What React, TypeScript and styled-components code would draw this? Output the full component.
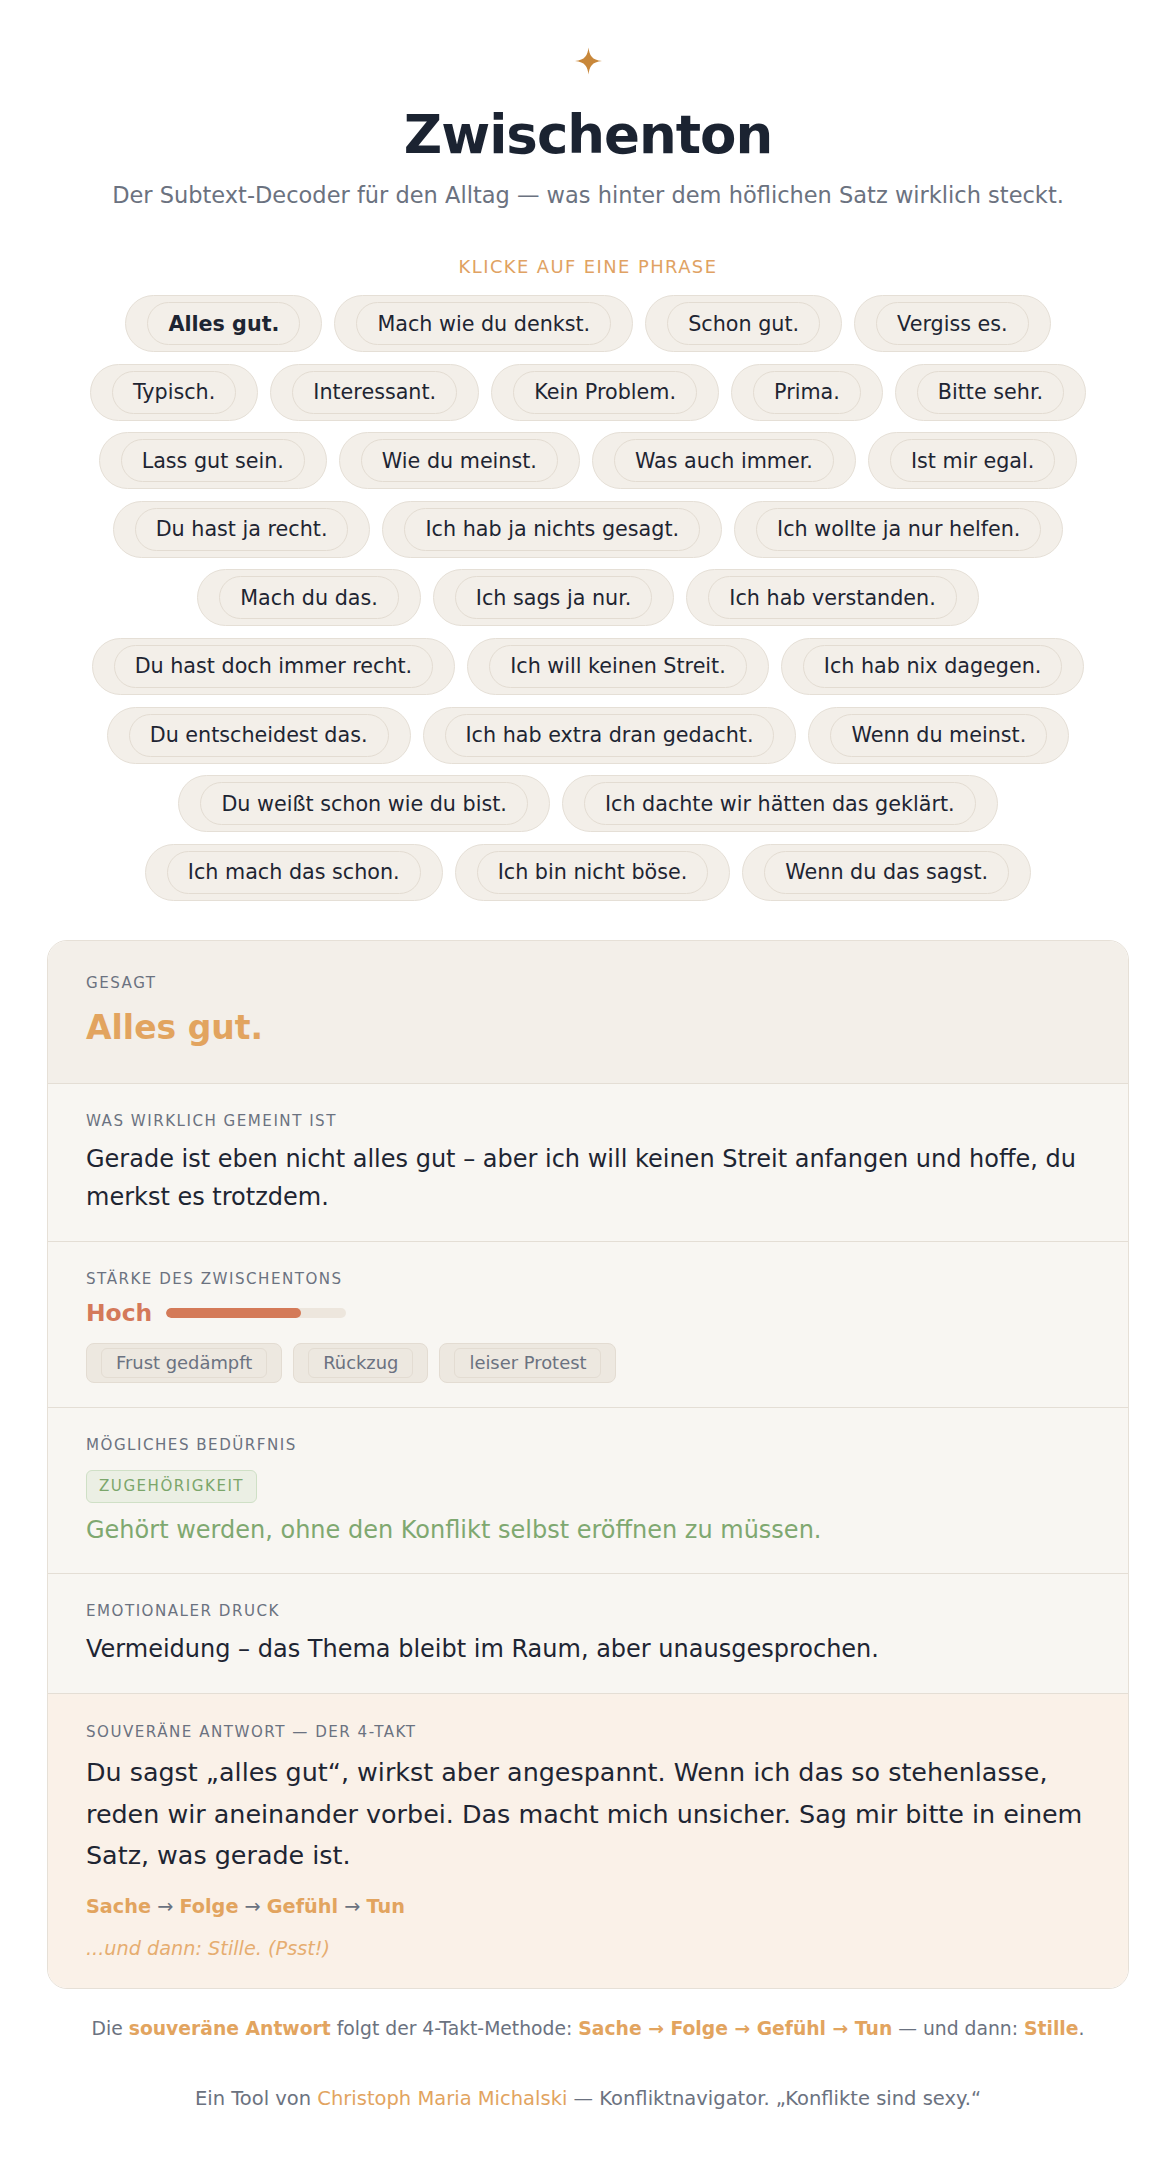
import React, { useState } from 'react';
import styled, { createGlobalStyle } from 'styled-components';

const GlobalStyle = createGlobalStyle`
  html, body { margin: 0; padding: 0; background: #ffffff; }
  body {
    font-family: "DejaVu Sans", "Noto Sans", sans-serif;
    color: #1f2633;
  }
  * { box-sizing: border-box; }
`;

const Page = styled.main`
  width: 1082px;
  margin: 0 auto;
  padding: 47px 0 40px;
`;

const Header = styled.header`
  display: flex;
  flex-direction: column;
  align-items: center;
  text-align: center;
`;

const Star = styled.svg`
  display: block;
  width: 27px;
  height: 28px;
`;

const Title = styled.h1`
  margin: 29px 0 0;
  font-size: 53px;
  line-height: 61px;
  font-weight: 700;
  letter-spacing: -1px;
  color: #1b2331;
`;

const Subtitle = styled.p`
  margin: 15px 0 0;
  font-size: 22.5px;
  line-height: 30px;
  color: #6b7280;
`;

const PickLabel = styled.div`
  margin-top: 45px;
  font-size: 17.9px;
  line-height: 23px;
  letter-spacing: 1.43px;
  color: #e0a263;
  text-transform: uppercase;
`;

const PillList = styled.div`
  margin-top: 17px;
  display: flex;
  flex-wrap: wrap;
  justify-content: center;
  column-gap: 12px;
  row-gap: 11.6px;
`;

const Pill = styled.button`
  font-family: inherit;
  border: 1px solid #e5dfd6;
  background: #f3efe9;
  border-radius: 999px;
  padding: 6px 21px;
  margin: 0;
  cursor: pointer;
`;

const PillInner = styled.span<{ $active: boolean }>`
  display: block;
  border: 1px solid #e3dcd2;
  border-radius: 999px;
  padding: 8.5px 20px;
  font-size: 20.7px;
  line-height: 24px;
  white-space: nowrap;
  color: #1e2532;
  font-weight: ${(p) => (p.$active ? 700 : 400)};
`;

const Card = styled.section`
  margin-top: 39px;
  border: 1px solid #e6e0d7;
  border-radius: 20px;
  overflow: hidden;
`;

type Tone = 'top' | 'mid' | 'warm';

const toneBg: Record<Tone, string> = {
  top: '#f3efe9',
  mid: '#f8f6f2',
  warm: '#faf1e8',
};

const Block = styled.div<{ $tone: Tone }>`
  background: ${(p) => toneBg[p.$tone]};
  padding: 28px 38px 24px;
  & + & {
    border-top: 1px solid #e4ded5;
  }
`;

const TopBlock = styled(Block)`
  padding: 33px 38px 36px;
`;

const WarmBlock = styled(Block)`
  padding-top: 29px;
  padding-bottom: 26px;
`;

const Label = styled.div<{ $gap?: number }>`
  font-size: 15.1px;
  line-height: 18px;
  letter-spacing: 1.5px;
  text-transform: uppercase;
  color: #6b7280;
  margin-bottom: ${(p) => p.$gap ?? 11}px;
`;

const Said = styled.div`
  font-size: 33px;
  line-height: 39.6px;
  font-weight: 700;
  color: #e2a45f;
`;

const BodyText = styled.p`
  margin: 0;
  font-size: 24px;
  line-height: 37.7px;
  color: #1e2532;
`;

const StrengthRow = styled.div`
  margin-top: 8px;
  display: flex;
  align-items: center;
  gap: 14px;
`;

const StrengthValue = styled.span`
  font-size: 23.4px;
  line-height: 29px;
  font-weight: 700;
  color: #d4795a;
`;

const Track = styled.div`
  width: 180px;
  height: 10px;
  border-radius: 5px;
  background: #ede6dd;
  overflow: hidden;
`;

const Fill = styled.div`
  height: 100%;
  border-radius: 5px;
  background: #d47a58;
`;

const TagRow = styled.div`
  margin-top: 15px;
  display: flex;
  flex-wrap: wrap;
  gap: 11px;
`;

const Tag = styled.span`
  display: inline-block;
  border: 1px solid #e3dcd2;
  background: #ede8e0;
  border-radius: 8px;
  padding: 4px 14px;
`;

const TagInner = styled.span`
  display: block;
  border: 1px solid #e3dcd2;
  border-radius: 6px;
  padding: 3px 14px;
  font-size: 17.9px;
  line-height: 22px;
  color: #6b7280;
`;

const NeedBadge = styled.span`
  display: inline-block;
  margin-top: 5px;
  border: 1px solid #cfe0c6;
  background: #ebefe4;
  border-radius: 6px;
  padding: 6.5px 12px;
  font-size: 15.1px;
  line-height: 18px;
  letter-spacing: 1.5px;
  text-transform: uppercase;
  color: #7ba66b;
`;

const NeedText = styled.p`
  margin: 9px 0 0;
  font-size: 24px;
  line-height: 37.7px;
  color: #7fa870;
`;

const Response = styled.p`
  margin: 0;
  font-size: 25.4px;
  line-height: 41.5px;
  color: #1e2532;
`;

const Steps = styled.div`
  margin-top: 16px;
  font-size: 19.25px;
  line-height: 27px;
  color: #6b7280;
`;

const Step = styled.b`
  font-weight: 700;
  color: #e2a45f;
`;

const Whisper = styled.div`
  margin-top: 15px;
  font-size: 19.25px;
  line-height: 27px;
  font-style: italic;
  color: #e6ad70;
`;

const Note = styled.p`
  margin: 26px 0 0;
  text-align: center;
  font-size: 18.75px;
  line-height: 27px;
  color: #6b7280;
`;

const Accent = styled.b`
  font-weight: 700;
  color: #e2a45f;
`;

const Credit = styled.p`
  margin: 42px 0 0;
  text-align: center;
  font-size: 19.5px;
  line-height: 29px;
  color: #6b7280;
`;

const CreditLink = styled.a`
  color: #e2a45f;
  text-decoration: none;
`;

const phrases = [
  'Alles gut.',
  'Mach wie du denkst.',
  'Schon gut.',
  'Vergiss es.',
  'Typisch.',
  'Interessant.',
  'Kein Problem.',
  'Prima.',
  'Bitte sehr.',
  'Lass gut sein.',
  'Wie du meinst.',
  'Was auch immer.',
  'Ist mir egal.',
  'Du hast ja recht.',
  'Ich hab ja nichts gesagt.',
  'Ich wollte ja nur helfen.',
  'Mach du das.',
  'Ich sags ja nur.',
  'Ich hab verstanden.',
  'Du hast doch immer recht.',
  'Ich will keinen Streit.',
  'Ich hab nix dagegen.',
  'Du entscheidest das.',
  'Ich hab extra dran gedacht.',
  'Wenn du meinst.',
  'Du weißt schon wie du bist.',
  'Ich dachte wir hätten das geklärt.',
  'Ich mach das schon.',
  'Ich bin nicht böse.',
  'Wenn du das sagst.',
];

const decoded = {
  meaning:
    'Gerade ist eben nicht alles gut – aber ich will keinen Streit anfangen und hoffe, du merkst es trotzdem.',
  strength: 'Hoch',
  level: 75,
  tags: ['Frust gedämpft', 'Rückzug', 'leiser Protest'],
  need: 'Zugehörigkeit',
  needText: 'Gehört werden, ohne den Konflikt selbst eröffnen zu müssen.',
  pressure: 'Vermeidung – das Thema bleibt im Raum, aber unausgesprochen.',
  answer:
    'Du sagst „alles gut“, wirkst aber angespannt. Wenn ich das so stehenlasse, reden wir aneinander vorbei. Das macht mich unsicher. Sag mir bitte in einem Satz, was gerade ist.',
};

export default function App() {
  const [selected, setSelected] = useState('Alles gut.');

  return (
    <>
      <GlobalStyle />
      <Page>
        <Header>
          <Star viewBox="0 0 24 24" aria-hidden="true">
            <path
              d="M12 0 C12.8 7 15 11.2 24 12 C15 12.8 12.8 17 12 24 C11.2 17 9 12.8 0 12 C9 11.2 11.2 7 12 0 Z"
              fill="#c8873a"
            />
          </Star>
          <Title>Zwischenton</Title>
          <Subtitle>
            Der Subtext-Decoder für den Alltag — was hinter dem höflichen Satz wirklich steckt.
          </Subtitle>
          <PickLabel>Klicke auf eine Phrase</PickLabel>
        </Header>

        <PillList>
          {phrases.map((p) => (
            <Pill key={p} type="button" onClick={() => setSelected(p)}>
              <PillInner $active={p === selected}>{p}</PillInner>
            </Pill>
          ))}
        </PillList>

        <Card>
          <TopBlock $tone="top">
            <Label $gap={16}>Gesagt</Label>
            <Said>{selected}</Said>
          </TopBlock>

          <Block $tone="mid">
            <Label>Was wirklich gemeint ist</Label>
            <BodyText>{decoded.meaning}</BodyText>
          </Block>

          <Block $tone="mid">
            <Label>Stärke des Zwischentons</Label>
            <StrengthRow>
              <StrengthValue>{decoded.strength}</StrengthValue>
              <Track>
                <Fill style={{ width: `${decoded.level}%` }} />
              </Track>
            </StrengthRow>
            <TagRow>
              {decoded.tags.map((t) => (
                <Tag key={t}>
                  <TagInner>{t}</TagInner>
                </Tag>
              ))}
            </TagRow>
          </Block>

          <Block $tone="mid">
            <Label>Mögliches Bedürfnis</Label>
            <NeedBadge>{decoded.need}</NeedBadge>
            <NeedText>{decoded.needText}</NeedText>
          </Block>

          <Block $tone="mid">
            <Label>Emotionaler Druck</Label>
            <BodyText>{decoded.pressure}</BodyText>
          </Block>

          <WarmBlock $tone="warm">
            <Label>Souveräne Antwort — der 4-Takt</Label>
            <Response>{decoded.answer}</Response>
            <Steps>
              <Step>Sache</Step> → <Step>Folge</Step> → <Step>Gefühl</Step> → <Step>Tun</Step>
            </Steps>
            <Whisper>...und dann: Stille. (Psst!)</Whisper>
          </WarmBlock>
        </Card>

        <Note>
          Die <Accent>souveräne Antwort</Accent> folgt der 4-Takt-Methode:{' '}
          <Accent>Sache → Folge → Gefühl → Tun</Accent> — und dann: <Accent>Stille</Accent>.
        </Note>
        <Credit>
          Ein Tool von <CreditLink href="#">Christoph Maria Michalski</CreditLink> — Konfliktnavigator.
          „Konflikte sind sexy.“
        </Credit>
      </Page>
    </>
  );
}
